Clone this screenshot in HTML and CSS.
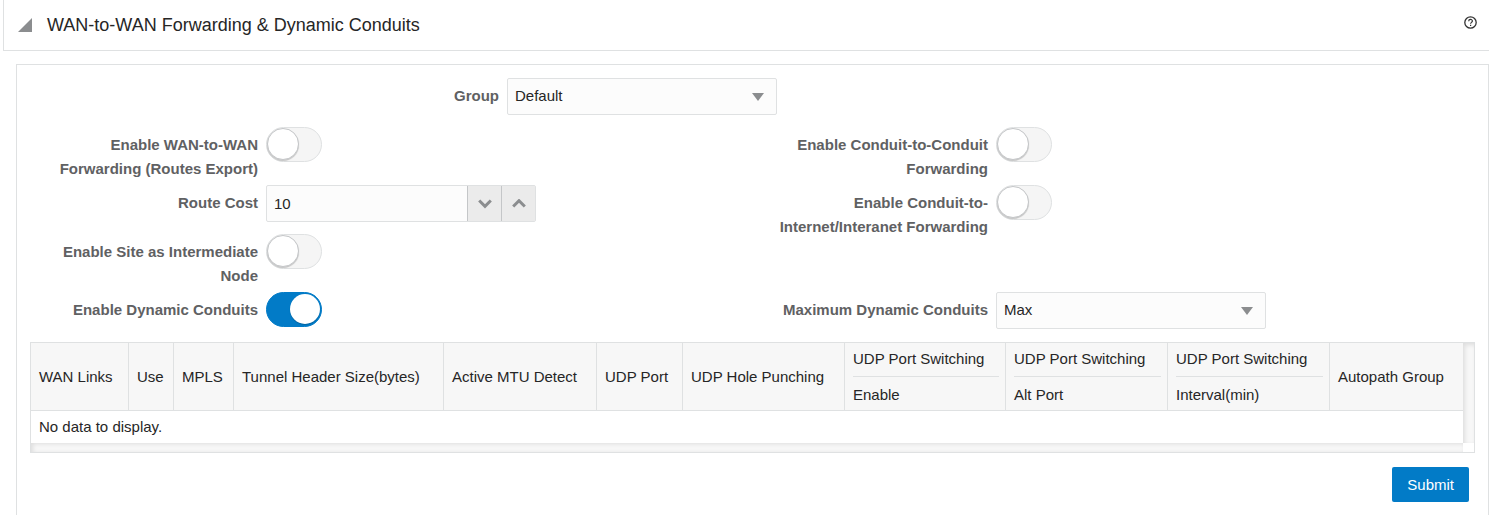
FILE: index.html
```html
<!DOCTYPE html>
<html lang="en">

<head>
  <meta charset="UTF-8">
  <meta name="viewport" content="width=device-width, initial-scale=1.0">
  <title>WAN-to-WAN Forwarding &amp; Dynamic Conduits</title>
  <link rel="stylesheet" href="styles.css">
</head>

<body>
  <header class="section-header">
    <svg class="disclosure" width="14" height="14" viewBox="0 0 14 14" aria-hidden="true">
      <path d="M14 0V14H0Z" fill="#8b8d8f" />
    </svg>
    <h1 class="section-title">WAN-to-WAN Forwarding &amp; Dynamic Conduits</h1>
    <button class="help" type="button" aria-label="Help">
      <svg width="13" height="13" viewBox="0 0 13 13" fill="none" stroke="#333">
        <circle cx="6.5" cy="6.5" r="5.7" stroke-width="1.3" />
        <path d="M4.7 5.2C4.7 2.9 8.4 2.9 8.4 5.1C8.4 6.4 6.6 6.4 6.6 7.8M6.6 8.8V10" stroke-width="1.2" />
      </svg>
    </button>
  </header>

  <form class="panel">
    <div class="group-row">
      <label class="label" for="group">Group</label>
      <div class="control">
        <select class="box" id="group">
          <option>Default</option>
        </select>
      </div>
    </div>

    <div class="fields">
      <div class="field">
        <label class="label" for="wanForwarding">Enable WAN-to-WAN Forwarding (Routes Export)</label>
        <div class="control"><input class="switch" type="checkbox" id="wanForwarding"></div>
      </div>
      <div class="field">
        <label class="label" for="conduitForwarding">Enable Conduit-to-Conduit Forwarding</label>
        <div class="control"><input class="switch" type="checkbox" id="conduitForwarding"></div>
      </div>
      <div class="field">
        <label class="label" for="routeCost">Route Cost</label>
        <div class="control">
          <div class="box spinner">
            <input class="spinner-input" type="text" id="routeCost" value="10">
            <button class="spinner-btn" type="button" aria-label="Decrease">
              <svg width="14" height="10" viewBox="0 0 14 10" fill="none" stroke="#8b8d8f" stroke-width="3">
                <path d="M1.2 1.5L7 7.3L12.8 1.5" />
              </svg>
            </button>
            <button class="spinner-btn" type="button" aria-label="Increase">
              <svg width="14" height="10" viewBox="0 0 14 10" fill="none" stroke="#8b8d8f" stroke-width="3">
                <path d="M1.2 7.5L7 1.7L12.8 7.5" />
              </svg>
            </button>
          </div>
        </div>
      </div>
      <div class="field tall">
        <label class="label" for="internetForwarding">Enable Conduit-to-Internet/Interanet Forwarding</label>
        <div class="control"><input class="switch" type="checkbox" id="internetForwarding"></div>
      </div>
      <div class="field">
        <label class="label" for="intermediateNode">Enable Site as Intermediate Node</label>
        <div class="control"><input class="switch" type="checkbox" id="intermediateNode"></div>
      </div>
      <div class="field">
        <label class="label" for="dynamicConduits">Enable Dynamic Conduits</label>
        <div class="control"><input class="switch" type="checkbox" id="dynamicConduits" checked></div>
      </div>
      <div class="field">
        <label class="label" for="maxConduits">Maximum Dynamic Conduits</label>
        <div class="control">
          <select class="box" id="maxConduits">
            <option>Max</option>
          </select>
        </div>
      </div>
    </div>

    <div class="table-wrap">
      <table class="links-table">
        <colgroup>
          <col class="col-links">
          <col class="col-use">
          <col class="col-mpls">
          <col class="col-tunnel">
          <col class="col-mtu">
          <col class="col-port">
          <col class="col-punching">
          <col class="col-enable">
          <col class="col-alt">
          <col class="col-interval">
          <col>
        </colgroup>
        <thead>
          <tr>
            <th>WAN Links</th>
            <th>Use</th>
            <th>MPLS</th>
            <th>Tunnel Header Size(bytes)</th>
            <th>Active MTU Detect</th>
            <th>UDP Port</th>
            <th>UDP Hole Punching</th>
            <th><span class="th-top">UDP Port Switching</span><span class="th-sub">Enable</span></th>
            <th><span class="th-top">UDP Port Switching</span><span class="th-sub">Alt Port</span></th>
            <th><span class="th-top">UDP Port Switching</span><span class="th-sub">Interval(min)</span></th>
            <th>Autopath Group</th>
          </tr>
        </thead>
        <tbody>
          <tr>
            <td colspan="11">No data to display.</td>
          </tr>
        </tbody>
      </table>
      <div class="track track-y"></div>
      <div class="track track-x"></div>
    </div>

    <div class="actions">
      <button class="submit" type="submit">Submit</button>
    </div>
  </form>
</body>

</html>
```

FILE: styles.css
```css
* {
  margin: 0;
  padding: 0;
  box-sizing: border-box;
}

body {
  background: #fff;
  color: #262626;
  font-family: "Liberation Sans", Arial, sans-serif;
  font-size: 15px;
  line-height: 24px;
}

input,
select,
button {
  font: inherit;
  color: inherit;
}

button {
  cursor: pointer;
}

/* section header */
.section-header {
  display: flex;
  align-items: center;
  gap: 15px;
  margin-left: 3px;
  padding: 13px 12px 13px 14px;
  border-left: 1px solid #dfe1e2;
  border-bottom: 1px solid #dfe1e2;
}

.section-title {
  flex: 1;
  font-size: 18px;
  font-weight: normal;
}

.help {
  display: flex;
  align-self: flex-start;
  padding: 3px 0;
  border: none;
  background: none;
}

/* form */
.panel {
  margin: 13px 0 0 16px;
  padding: 13px 13px 13px;
  border: 1px solid #dfe1e2;
  border-bottom: none;
}

.group-row,
.field {
  display: grid;
  column-gap: 8px;
  align-items: start;
}

.group-row {
  grid-template-columns: 469px 270px;
  margin-bottom: 4px;
}

.fields {
  display: grid;
  grid-template-columns: 1fr 1fr;
  gap: 4px 15px;
  padding-bottom: 5px;
}

.field {
  grid-template-columns: 228px 270px;
}

.tall {
  grid-row: span 2;
}

.label {
  padding-top: 6px;
  color: #5f6163;
  font-weight: bold;
  text-align: right;
}

.field .label {
  padding-left: 16px;
}

.control {
  height: 45px;
}

.box {
  width: 100%;
  height: 37px;
  border: 1px solid #dfe1e2;
  border-radius: 2px;
  background-color: #fcfcfc;
}

select.box {
  padding: 0 32px 2px 7px;
  appearance: none;
  background-image: url("data:image/svg+xml,%3Csvg xmlns='http://www.w3.org/2000/svg' width='12' height='8' viewBox='0 0 12 8'%3E%3Cpath d='M0 0H12L6 8Z' fill='%238b8d8f'/%3E%3C/svg%3E");
  background-repeat: no-repeat;
  background-position: right 12px center;
}

.spinner {
  display: flex;
}

.spinner-input {
  flex: 1;
  min-width: 0;
  padding: 0 7px;
  border: none;
  background: none;
}

.spinner-btn {
  display: flex;
  align-items: center;
  justify-content: center;
  width: 34px;
  border: none;
  border-left: 1px solid #c4c6c8;
  background: #ebebeb;
}

.switch {
  display: block;
  width: 56px;
  height: 35px;
  border: 1px solid #dfe1e2;
  border-radius: 18px;
  background: #f5f5f5;
  appearance: none;
  cursor: pointer;
}

.switch::before {
  content: "";
  display: block;
  box-sizing: border-box;
  width: 32px;
  height: 32px;
  border: 1px solid #c4c6c8;
  border-radius: 50%;
  background: #fff;
  box-shadow: 0 1px 1px rgba(0, 0, 0, 0.2);
}

.switch:checked {
  border-color: #027bc7;
  background: #027bc7;
}

.switch:checked::before {
  width: 30px;
  height: 30px;
  margin: 1px 1px 1px auto;
  border: none;
}

/* table with its scroll tracks */
.table-wrap {
  display: grid;
  grid-template-columns: 1fr 11px;
  grid-template-rows: auto 9px;
  border: 1px solid #dfe1e2;
}

.links-table {
  width: 100%;
  table-layout: fixed;
  border-collapse: separate;
  border-spacing: 0;
}

.col-links {
  width: 98px;
}

.col-use {
  width: 45px;
}

.col-mpls {
  width: 60px;
}

.col-tunnel {
  width: 210px;
}

.col-mtu {
  width: 153px;
}

.col-port {
  width: 86px;
}

.col-enable {
  width: 161px;
}

.col-punching,
.col-alt,
.col-interval {
  width: 162px;
}

th {
  height: 68px;
  padding: 0 6px 0 8px;
  border-right: 1px solid #dfe1e2;
  border-bottom: 1px solid #dfe1e2;
  background: #f7f7f7;
  font-weight: normal;
  text-align: left;
  white-space: nowrap;
}

th:last-child {
  border-right: none;
}

.th-top,
.th-sub {
  display: block;
}

.th-top {
  padding-bottom: 5px;
  border-bottom: 1px solid #dfe1e2;
}

.th-sub {
  padding-top: 6px;
}

td {
  height: 32px;
  padding: 0 8px;
}

.track {
  background: #f7f7f7;
}

.track-y {
  box-shadow: inset 2px 2px 4px rgba(0, 0, 0, 0.1);
}

.track-x {
  box-shadow: inset 2px 1px 4px rgba(0, 0, 0, 0.1);
}

.actions {
  display: flex;
  justify-content: flex-end;
  padding: 14px 6px 0 0;
}

.submit {
  height: 35px;
  padding: 0 15px;
  border: none;
  border-radius: 2px;
  background: #027bc7;
  color: #fff;
}
```
